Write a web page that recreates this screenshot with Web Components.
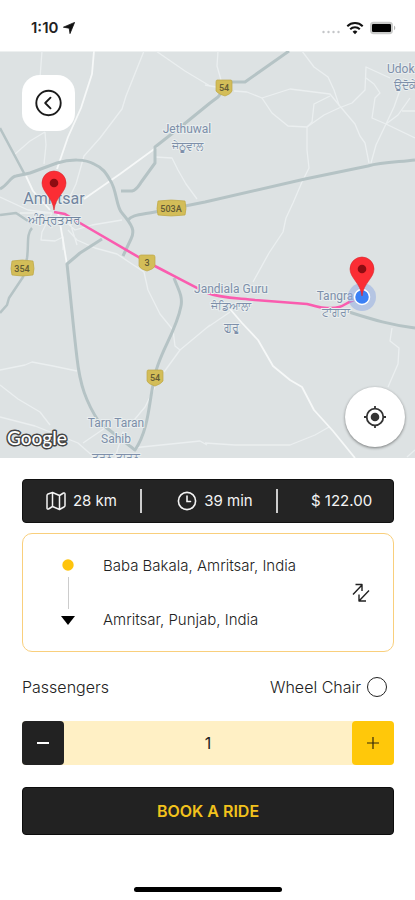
<!DOCTYPE html>
<html lang="en">
<head>
<meta charset="utf-8">
<meta name="viewport" content="width=device-width, initial-scale=1">
<title>Book a ride</title>
<style>
  body { margin: 0; background: #fff; font-family: Inter, "Noto Sans", sans-serif; color: #222; }
</style>
</head>
<body>
<ride-screen></ride-screen>

<script>
const define = (name, html, setup) => {
  const template = document.createElement('template');
  template.innerHTML = html;
  customElements.define(name, class extends HTMLElement {
    constructor() {
      super();
      this.attachShadow({ mode: 'open' }).append(template.content.cloneNode(true));
      if (setup) setup(this.shadowRoot, this);
    }
  });
};

define('status-bar', `
<style>
  :host { display: flex; align-items: center; justify-content: space-between; height: 51px; padding: 4px 19px 0 31px; box-sizing: border-box; background: #fff; }
  .side { display: flex; align-items: center; gap: 5px; }
  .time { font-size: 15px; line-height: 20px; font-weight: 600; color: #222; }
  svg { display: block; }
</style>
<div class="side">
  <span class="time">1:10</span>
  <svg width="12" height="12" viewBox="0 0 12 12" aria-hidden="true"><path d="M11.6.4 7 11.6 6.2 6.2.4 5.2z" fill="#111" stroke="#111" stroke-width=".8" stroke-linejoin="round"/></svg>
</div>
<div class="side">
  <svg width="20" height="16" viewBox="0 0 20 16" aria-hidden="true"><g fill="#c4c6c8"><circle cx="2.5" cy="12" r="1.2"/><circle cx="7.5" cy="12" r="1.2"/><circle cx="12.5" cy="12" r="1.2"/><circle cx="17.5" cy="12" r="1.2"/></g></svg>
  <svg width="18" height="14" viewBox="0 0 18 14" fill="none" stroke="#111" stroke-width="2" aria-hidden="true"><path d="M1.3 5.2a11 11 0 0 1 15.4 0M4.2 8.2a6.8 6.8 0 0 1 9.6 0"/><path d="M9 13.2 6.6 10.8a3.4 3.4 0 0 1 4.8 0z" fill="#111" stroke="none"/></svg>
  <svg width="27" height="14" viewBox="0 0 27 14" aria-hidden="true"><rect x="1" y=".8" width="23" height="12.4" rx="3.6" fill="#c9cac9"/><rect x="3" y="3" width="19" height="8" rx="1.2" fill="#000"/><path d="M25 4.8c1.7.6 1.7 3.8 0 4.4z" fill="#b5b6b5"/></svg>
</div>`);

define('route-map', `
<style>
  :host { display: block; position: relative; background: #dde2e3; }
  .map { display: block; width: 100%; height: auto; }
  text { font-family: Roboto, "Noto Sans", sans-serif; }
  .place { fill: #7d8fa9; stroke: #e9eeef; stroke-width: 2; paint-order: stroke; text-anchor: middle; font-size: 12px; }
  .city { font-size: 16px; fill: #71859f; }
  .local { font-size: 11px; }
  .city-local { font-size: 12px; font-weight: 500; fill: #71859f; }
  .num { fill: #625a35; font-size: 9px; font-weight: 500; text-anchor: middle; }
  .logo { font-size: 19px; font-weight: 500; font-family: Lato, sans-serif; fill: #fff; stroke: #444; stroke-width: 3; paint-order: stroke; stroke-linejoin: round; }
  ::slotted([slot=back]) { position: absolute; left: 22px; top: 24px; }
  ::slotted([slot=locate]) { position: absolute; right: 10px; bottom: 11px; }
</style>
<svg class="map" viewBox="0 51 415 407" role="img" aria-label="Route from Tangra to Amritsar">
  <defs>
    <g id="pin"><path d="M0 27C-1.500 14-12 9-12 0a12 12 0 0 1 24 0C12 9 1.500 14 0 27z" fill="#fb2d34" stroke="#d9262d" stroke-width=".6"/><circle r="4.300" fill="#8d0d12"/></g>
  </defs>
  <rect y="51" width="415" height="407" fill="#dde2e3"/>
  <path d="M0 51.500H415" stroke="#edf0f0"/>
  <g fill="none" stroke="#ebeff0" stroke-width="1.300" stroke-linejoin="round">
    <path d="M42 51 40 78M144 51 126 96 122 109 100 138 84 156 76 184 66 205M156 51 185 71 210 86"/>
    <path d="M15 154 30 141 45 132M45 132 46 145 44 164M155 157 172 158 178 170 186 184 197 199"/>
    <path d="M218 51 217 66 221 80M205 85 216 87M234 91 247 92 262 98 290 89 330 94 339 105"/>
    <path d="M262 98 272 113 288 126 307 127 312 122 314 104 330 96M307 127 307 150 309 168 302 182 293 203 286 218 283 232 269 253 253 282"/>
    <path d="M302 51 314 67 328 77 334 90 339 105 355 124 360 136 365 143 369 163M307 127 324 115 339 108 352 103 365 90 366 67 390 78M366 78 374 84 380 93 375 98 372 118 386 124 415 138M400 90 394 107 386 124 376 145 371 163M386 124 398 115 410 98M402 111H415"/>
    <path d="M0 197 28 210 52 213M20 213 52 213M52 213 42 232 41 240 55 241 63 237 63 250M64 220 75 230 92 225 122 220M68 230 77 240 95 248 117 254 144 272 148 290M68 216 77 245M0 370 25 365 32 362 53 366 77 371M0 385 18 399 40 412 50 425"/>
    <path d="M148 290 160 314 173 330 175 346 180 350 210 325M180 350 164 372M155 387 145 407 130 425M205 329 230 312M0 417 35 426 78 443 95 458M83 443 105 428 115 433M115 458 123 432 132 448 200 441 207 445M205 443 235 445 290 445 315 435 329 427M392 328 390 341 399 348 398 364 388 387M407 457 415 450"/>
  </g>
  <g fill="none" stroke="#f6f8f8" stroke-width="1.800" stroke-linejoin="round">
    <path d="M94 51 92 74 81 108 68 137 57 169M157 147 120 174 84 199M26 176 33 191 50 210M58 212 63 240 67 265"/>
    <path d="M230 309 242 323 258 340 273 366 290 380 302 387 314 410 333 431 355 458"/>
  </g>
  <g fill="none" stroke="#b5c3c5" stroke-width="3" stroke-linejoin="round">
    <path d="M0 189C8 185 10 177 16 176L30 173 57 163C70 159 86 159 94 164 103 168 106 173 110 180 117 190 116 207 122 213 133 226 135 231 131 239L123 256"/>
    <path d="M0 128 25 175M0 215 16 213 31 223M32 228C26 234 29 246 27 258L23 277 9 298 7 305 0 313" stroke-width="2.500"/>
    <path d="M102 239 80 253 67 264C71 300 73 325 77 358 80 385 86 402 99 422L135 450C149 430 149 401 154 380 157 356 176 333 181 306 183 296 178 289 174 278"/>
    <path d="M128 220C132 215 139 215 155 212L205 202 305 179 368 166C382 162 400 162 415 160"/>
    <path d="M121 191H132C137 190 139 185 142 181L155 163V147L183 125 210 103 218 97 230 82H245L289 51"/>
    <path d="M349 312C374 320 391 325 415 328"/>
  </g>
  <path d="M54 212 65 214 80 223 147 262C163 270 183 281 205 292 221 299 240 298 255 300L307 304C317 306 319 308 327 308 344 309 344 303 354 300" fill="none" stroke="#fa5caf" stroke-width="2.600" stroke-linejoin="round"/>
  <g fill="#d3bd58" stroke="#bda848" stroke-width=".7">
    <path d="M217 80H231Q232 80 232 82V91Q231 94 225 96 218 94 216 91V82Q216 80 217 80z"/>
    <path d="M158 201Q171 199 185 201 187 209 185 215 171 217 158 215 156 209 158 201z"/>
    <path d="M12 261Q22 259 33 261 35 269 33 275 22 277 12 275 10 269 12 261z"/>
    <path d="M141 255H153Q155 255 155 257V266Q154 269 147 271 140 269 139 266V257Q139 255 141 255z"/>
    <path d="M148 370H161Q163 370 163 372V381Q161 384 155 386 148 384 147 381V372Q147 370 148 370z"/>
  </g>
  <text class="num" x="224" y="91">54</text><text class="num" x="171" y="212">503A</text><text class="num" x="22" y="272">354</text><text class="num" x="147" y="266">3</text><text class="num" x="155" y="381">54</text>
  <text class="place" x="187" y="133">Jethuwal</text><text class="place local" x="187" y="150">ਜੇਠੂਵਾਲ</text>
  <text class="place city" x="54" y="204">Amritsar</text><text class="place city-local" x="54" y="224">ਅੰਮ੍ਰਿਤਸਰ</text>
  <text class="place" x="231" y="293">Jandiala Guru</text><text class="place local" x="231" y="310">ਜੰਡਿਆਲਾ</text><text class="place local" x="231" y="331">ਗੁਰੂ</text>
  <text class="place" x="335" y="300">Tangra</text><text class="place local" x="336" y="316">ਟਾਂਗਰਾ</text>
  <text class="place" x="116" y="427">Tarn Taran</text><text class="place" x="116" y="443">Sahib</text><text class="place local" x="116" y="461">ਤਰਨ ਤਾਰਨ</text>
  <text class="place" x="387" y="73" style="text-anchor:start">Udoke</text><text class="place local" x="394" y="89" style="text-anchor:start">ਉਦੋਕੇ</text>
  <circle cx="362" cy="297" r="14" fill="#8ea8e3" opacity=".5"/>
  <circle cx="362" cy="297" r="7.500" fill="#3b80f5" stroke="#fff" stroke-width="1.500"/>
  <use href="#pin" x="54" y="183"/><use href="#pin" x="362" y="269"/>
  <text class="logo" x="7" y="445">Google</text>
</svg>
<slot name="back"></slot>
<slot name="locate"></slot>`);

define('back-button', `
<style>
  :host { display: block; }
  button { display: grid; place-items: center; width: 53px; height: 56px; border: 0; border-radius: 18px; background: #fff; padding: 0; }
</style>
<button aria-label="Back"><svg width="28" height="28" viewBox="0 0 28 28" fill="none" stroke="#1b1b1b" stroke-width="1.900" stroke-linecap="round" stroke-linejoin="round"><circle cx="13.500" cy="14" r="12.200"/><path d="m15.500 8.700-5.300 5.300 5.300 5.300"/></svg></button>`);

define('locate-button', `
<style>
  :host { display: block; }
  button { display: grid; place-items: center; width: 60px; height: 60px; border: 0; border-radius: 50%; background: #fff; padding: 0; box-shadow: 0 1px 3px #0007; }
</style>
<button aria-label="My location"><svg width="24" height="24" viewBox="0 0 24 24" fill="none" stroke="#333" stroke-width="1.800"><circle cx="12" cy="12" r="8.300"/><circle cx="12" cy="12" r="4.300" fill="#333" stroke="none"/><path d="M12 1v3M12 20v3M1 12h3M20 12h3"/></svg></button>`);

define('trip-summary', `
<style>
  :host { display: grid; grid-template-columns: 6fr 7fr 6fr; align-items: center; height: 44px; background: #242424; border: 1px solid #111; border-radius: 4px; box-sizing: border-box; color: #f4f4f4; font-size: 15px; line-height: 24px; }
  div { display: flex; align-items: center; justify-content: center; gap: 7px; height: 24px; }
  div:first-child { padding-right: 4px; }
  div + div { border-left: 2px solid #ccc; padding-left: 12px; }
</style>
<div><svg width="20" height="20" viewBox="0 0 20 20" fill="none" stroke="#f4f4f4" stroke-width="1.500" stroke-linejoin="round" aria-hidden="true"><path d="M1 4.500Q1 3.500 2 3L6.500 1.500 13.500 4.500 17.500 2Q19 1.500 19 3V14.500Q19 15.500 18 16L13.500 18.500 6.500 15.500 2.500 18Q1 18.500 1 17zM6.500 1.500V15.500M13.500 4.500V18.500"/></svg><span>28 km</span></div>
<div><svg width="20" height="20" viewBox="0 0 20 20" fill="none" stroke="#f4f4f4" stroke-width="1.600" stroke-linecap="round" aria-hidden="true"><circle cx="10" cy="10" r="8.600"/><path d="M10 5v5.500h3.500"/></svg><span>39 min</span></div>
<div><span>$ 122.00</span></div>`);

define('route-card', `
<style>
  :host { display: grid; grid-template-columns: 14px 1fr auto; column-gap: 28px; align-items: center; height: 119px; padding: 0 22px 0 38px; border: 1px solid #f9cf7c; border-radius: 10px; box-sizing: border-box; font-size: 15px; line-height: 20px; font-weight: 300; color: #222; }
  .stops { display: grid; gap: 34px; }
  button { border: 0; background: none; padding: 0; display: grid; }
  svg { display: block; }
</style>
<svg width="14" height="68" viewBox="0 0 14 68" aria-hidden="true"><circle cx="7" cy="6" r="5.700" fill="#ffc40c"/><path d="M7.500 18V50" stroke="#ccc"/><path d="M0 57H14L7 66z" fill="#000"/></svg>
<div class="stops"><slot name="from"></slot><slot name="to"></slot></div>
<button aria-label="Swap stops"><svg width="20" height="20" viewBox="0 0 20 20" fill="none" stroke="#222" stroke-width="1.400" stroke-linejoin="round"><path d="M2 11.500 11 2M4.500 1.500H11V8M18 7.500 8.500 17.500M8 11.500V18H15"/></svg></button>`);

define('ride-options', `
<style>
  :host { display: flex; align-items: center; justify-content: space-between; font-size: 16px; line-height: 20px; font-weight: 300; padding-right: 7px; color: #222; }
  label { display: flex; align-items: center; gap: 6px; }
  input { appearance: none; width: 20px; height: 20px; margin: 0; border: 1px solid #222; border-radius: 50%; background: #fff; }
  input:checked { background: #ffc40c; }
</style>
<span>Passengers</span>
<label>Wheel Chair <input type="checkbox"></label>`);

define('passenger-stepper', `
<style>
  :host { display: flex; align-items: stretch; height: 44px; background: #fff0c5; border-radius: 4px; color: #222; }
  button { display: grid; place-items: center; width: 42px; padding: 0; border: 0; border-radius: 4px; }
  .less { background: #222; color: #fff; }
  .more { background: #ffc80a; color: #33290a; }
  output { flex: 1; display: grid; place-items: center; font-size: 16px; line-height: 24px; }
</style>
<button class="less" aria-label="Fewer passengers"><svg width="14" height="14" viewBox="0 0 14 14" stroke="currentColor" stroke-width="2"><path d="M1 7H13"/></svg></button>
<output aria-label="Passengers">1</output>
<button class="more" aria-label="More passengers"><svg width="14" height="14" viewBox="0 0 14 14" stroke="currentColor" stroke-width="1.200"><path d="M1 7H13M7 1V13"/></svg></button>`,
root => {
  const out = root.querySelector('output');
  const step = by => { out.value = Math.max(1, Number(out.value) + by); };
  root.querySelector('.less').addEventListener('click', () => step(-1));
  root.querySelector('.more').addEventListener('click', () => step(1));
});

define('primary-button', `
<style>
  :host { display: block; }
  button { display: block; width: 100%; height: 48px; border: 1px solid #0c0c0c; border-radius: 4px; background: #222; color: #f2c21c; font: 600 16px/24px Inter, sans-serif; }
</style>
<button><slot></slot></button>`);

define('ride-screen', `
<style>
  :host { display: flex; flex-direction: column; min-height: 100vh; background: #fff; }
  main { display: grid; grid-template-columns: minmax(0, 1fr); padding: 21px 21px 0 22px; }
  route-card { margin-top: 10px; }
  ride-options { margin-top: 25px; }
  passenger-stepper { margin-top: 24px; }
  primary-button { margin-top: 22px; }
  footer { margin: auto auto 8px; width: 148px; height: 5px; border-radius: 3px; background: #000; }
</style>
<status-bar></status-bar>
<route-map><back-button slot="back"></back-button><locate-button slot="locate"></locate-button></route-map>
<main>
  <trip-summary></trip-summary>
  <route-card><span slot="from">Baba Bakala, Amritsar, India</span><span slot="to">Amritsar, Punjab, India</span></route-card>
  <ride-options></ride-options>
  <passenger-stepper></passenger-stepper>
  <primary-button>BOOK A RIDE</primary-button>
</main>
<footer></footer>`);
</script>
</body>
</html>
